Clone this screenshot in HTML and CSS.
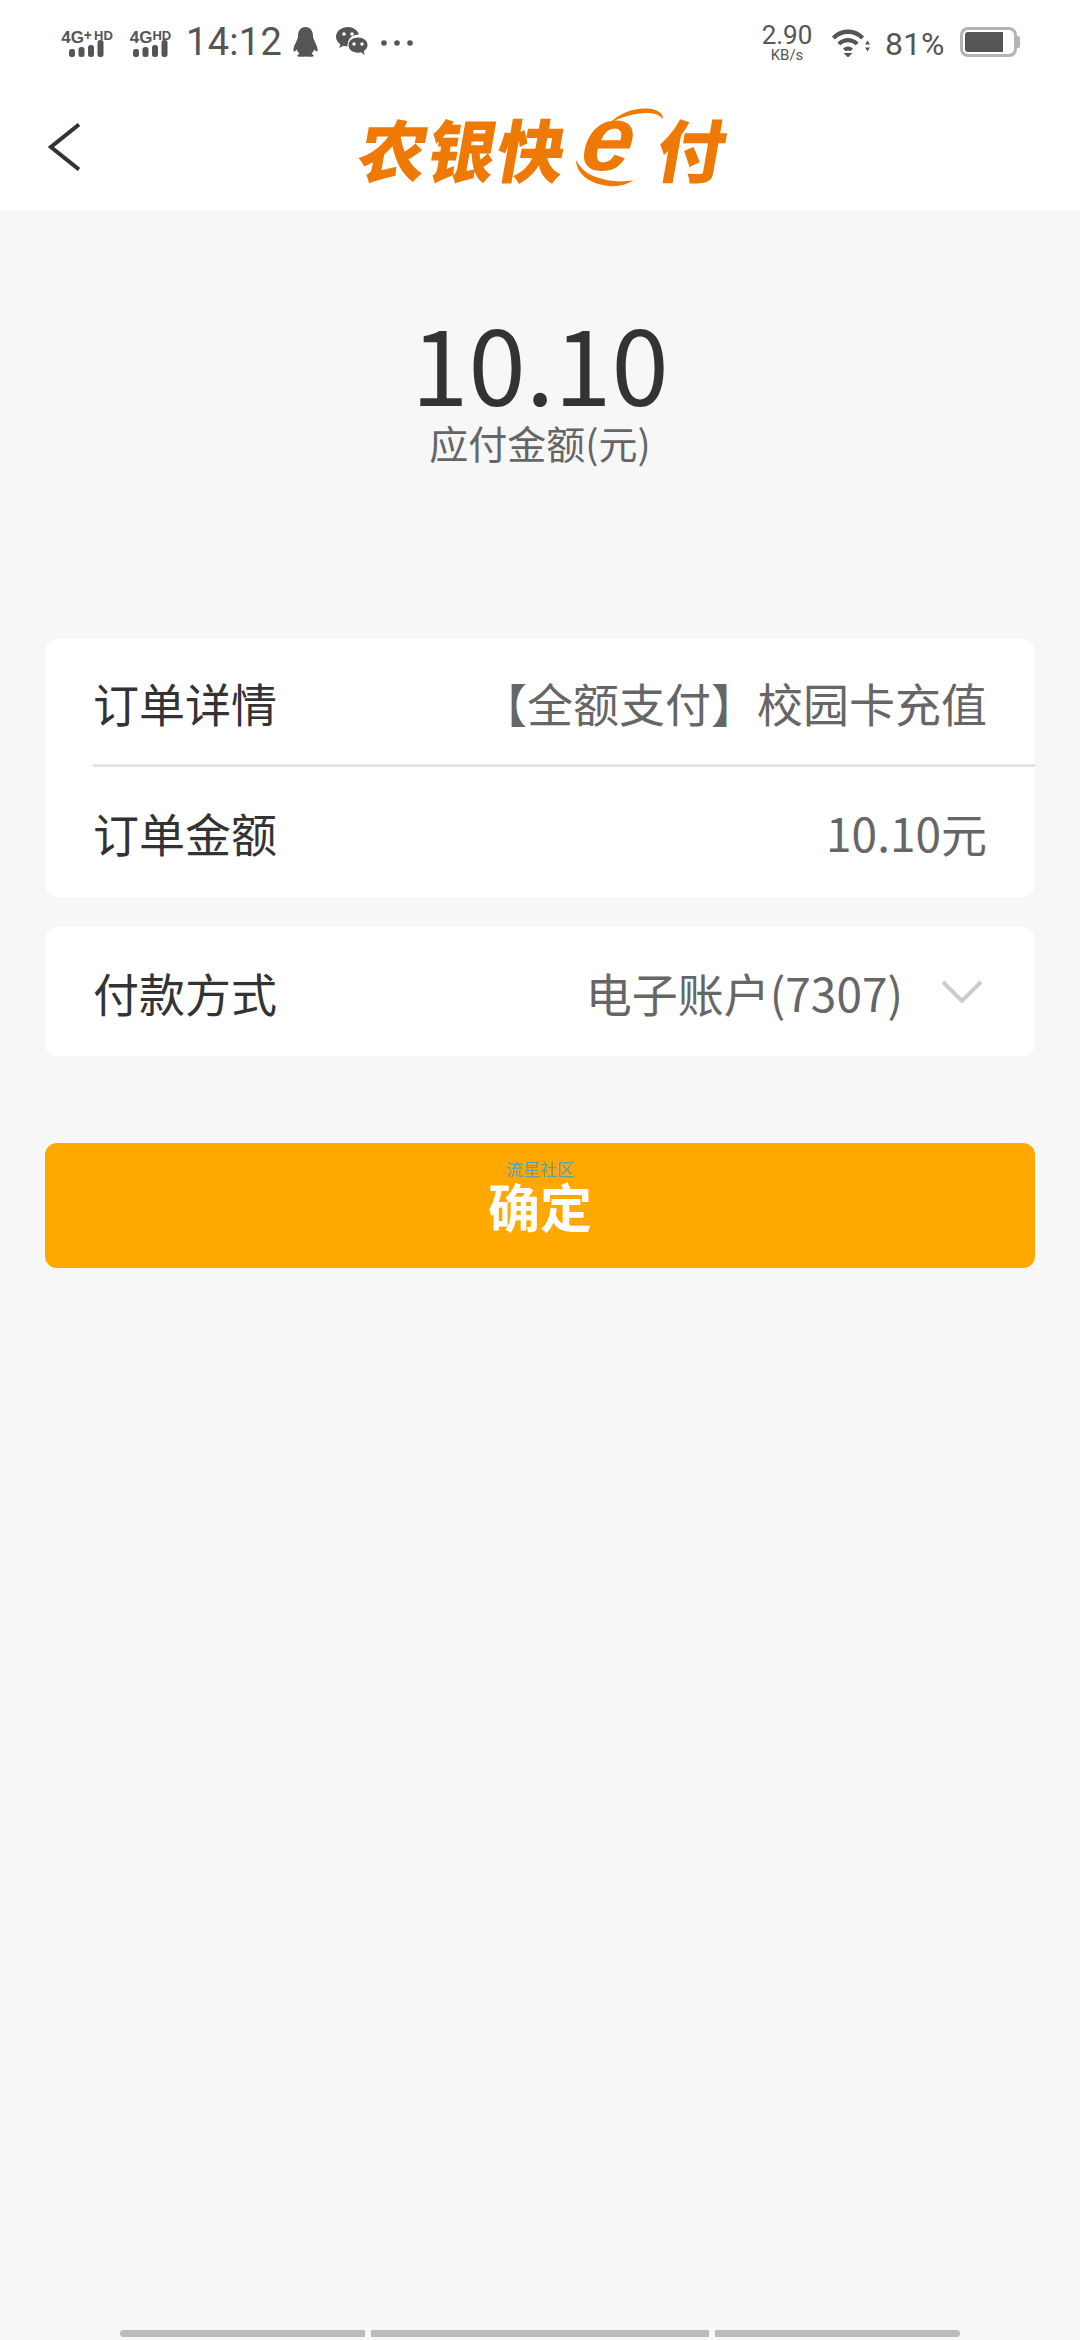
FILE: index.html
```html
<!DOCTYPE html>
<html lang="zh-CN">
<head>
<meta charset="utf-8">
<title>农银快e付</title>
<link rel="stylesheet" href="styles.css">
</head>
<body>
<div class="screen">
  <header class="top">
    <div class="status">
      <div class="status-left">
        <div class="sim sim-a">
          <span class="sim-label">4G<sup>+</sup><b>HD</b></span>
          <svg class="bars" width="36" height="17" viewBox="0 0 36 17"><rect x="0" y="9" width="6" height="8" rx="2.5"/><rect x="9.500" y="7" width="6" height="10" rx="2.500"/><rect x="19" y="5" width="6" height="12" rx="2.500"/><rect x="28.500" y="0" width="6" height="17" rx="2.500"/></svg>
        </div>
        <div class="sim sim-b">
          <span class="sim-label">4G<b>HD</b></span>
          <svg class="bars" width="36" height="17" viewBox="0 0 36 17"><rect x="0" y="9" width="6" height="8" rx="2.500"/><rect x="9.500" y="7" width="6" height="10" rx="2.500"/><rect x="19" y="5" width="6" height="12" rx="2.500"/><rect x="28.500" y="0" width="6" height="17" rx="2.500"/></svg>
        </div>
        <span class="time">14:12</span>
        <svg class="qq" width="25" height="30" viewBox="0 0 25 30"><path d="M12.500 0C7.500 0 5 4 5 9c0 1.500-.5 3-1.500 5C1.500 18 0 21.500.5 24c.5 1.200 2 .2 3.300-1.500.6 1.800 1.400 3.100 2.700 4.200C4.500 27.500 4 28.500 4.500 29.200 5.500 30 9 30 12.500 29.500 16 30 19.500 30 20.500 29.200 21 28.500 20.500 27.500 18.500 26.700c1.300-1.100 2.100-2.400 2.700-4.200 1.300 1.700 2.800 2.700 3.300 1.500.5-2.500-1-6-3-10-1-2-1.500-3.500-1.500-5C20 4 17.500 0 12.500 0z"/></svg>
        <svg class="wechat" width="32" height="31" viewBox="0 0 32 31"><path d="M12 0C5.400 0 0 4.300 0 9.700c0 3 1.700 5.700 4.300 7.500L3.200 21l4.300-2.300c1.300.4 2.700.6 4 .6h.4A9 9 0 0 1 12 16.500C12 11.500 16.700 7.600 23 7.600 21.600 3.200 17.200 0 12 0z"/><circle cx="8" cy="7" r="1.800" fill="#fff"/><circle cx="16" cy="7" r="1.800" fill="#fff"/><path d="M22 10c-5.500 0-10 3.600-10 8.100s4.500 8.100 10 8.100c1 0 2-.1 3-.4l4.200 3.200-.8-4.900c2.200-1.500 3.600-3.600 3.600-6 0-4.500-4.500-8.100-10-8.100z" stroke="#fff" stroke-width="1"/><circle cx="18" cy="17" r="1.700" fill="#fff"/><circle cx="26" cy="17" r="1.700" fill="#fff"/></svg>
        <svg class="dots" width="32" height="6" viewBox="0 0 32 6"><circle cx="3" cy="3" r="2.800"/><circle cx="16" cy="3" r="2.800"/><circle cx="29" cy="3" r="2.800"/></svg>
      </div>
      <div class="status-right">
        <div class="speed"><span class="speed-num">2.90</span><span class="speed-unit">KB/s</span></div>
        <svg class="wifi" width="38" height="28" viewBox="0 0 38 28"><path d="M0 7.500C8-2 24-2 32 7.500l-2.700 3C22.500 3 9.500 3 2.700 10.500z"/><path d="M5.500 13.500c6-6 15-6 21 0l-2.700 3c-4.500-4.300-11-4.300-15.600 0z"/><path d="M11 19.500c3-2.800 7-2.800 10 0l-2.600 2.800c-1.500-1.200-3.300-1.200-4.800 0z"/><path d="M11.500 24h9L16 28.500z"/><path d="M33 15.500l2.500-4 2.500 4zM33 18.500h5l-2.500 4z"/></svg>
        <span class="battery-pct">81%</span>
        <div class="battery"><div class="battery-level"></div></div><div class="battery-cap"></div>
      </div>
    </div>
    <nav class="nav">
      <svg class="back" width="32" height="48" viewBox="0 0 32 48"><path d="M31 1.500 3 24l28 22.500" fill="none" stroke="#333" stroke-width="4"/></svg>
      <div class="logo">
        <span class="logo-cn">农银快</span><span class="logo-e">e</span><span class="logo-cn logo-fu">付</span>
        <svg class="logo-swoosh" width="130" height="80" viewBox="0 0 130 80"><path d="M37 16C50 2 70-2 83 2c6 2 8 5 8 9-3-4-9-6-16-6-13 0-27 4-38 11z"/><path d="M4 52c0 13 13 24 33 26 9 1 17-1 25-6-14 3-27 1-38-3C15 66 8 60 4 52z"/></svg>
      </div>
    </nav>
  </header>

  <main class="content">
    <section class="summary">
      <div class="amount">10.10</div>
      <div class="amount-label">应付金额(元)</div>
    </section>

    <section class="card">
      <div class="row row-detail">
        <span class="row-label">订单详情</span>
        <span class="row-value">【全额支付】校园卡充值</span>
      </div>
      <div class="row row-total">
        <span class="row-label">订单金额</span>
        <span class="row-value">10.10元</span>
      </div>
    </section>

    <section class="card card-pay">
      <div class="row row-pay">
        <span class="row-label">付款方式</span>
        <span class="pay-choice">
          <span class="row-value">电子账户(7307)</span>
          <svg class="chevron" width="42" height="24" viewBox="0 0 42 24"><path d="M2 2l19 19L40 2" fill="none" stroke="#ccc" stroke-width="4"/></svg>
        </span>
      </div>
    </section>

    <button class="confirm" type="button">
      <span class="watermark">流星社区</span>
      <span>确定</span>
    </button>
  </main>

  <footer class="home-bar">
    <span class="seg seg-a"></span><span class="seg seg-b"></span><span class="seg seg-c"></span>
  </footer>
</div>
</body>
</html>
```
FILE: styles.css
```css
* { box-sizing: border-box; }
html, body { margin: 0; padding: 0; }
body {
  width: 1080px;
  height: 2340px;
  overflow: hidden;
  font-family: "Noto Sans CJK SC", "Noto Sans", sans-serif;
  background: #f7f7f7;
}
.screen { display: flex; flex-direction: column; height: 2340px; }

/* header */
.top { height: 210px; background: #fff; flex: none; }
.status {
  height: 84px;
  padding: 27px 60px 0 59px;
  display: flex;
  justify-content: space-between;
  align-items: flex-start;
  color: #555;
}
.status-left, .status-right { display: flex; align-items: flex-start; }
.status svg { fill: #555; flex: none; }
.sim { display: flex; flex-direction: column; align-items: center; width: 56px; height: 30px; }
.sim-b { width: 47px; margin-left: 12px; }
.sim-label {
  font: 700 17px/17px "Liberation Sans", sans-serif;
  white-space: nowrap;
  height: 15px;
  color: #555;
}
.sim-label sup { font-size: 14px; line-height: 0; vertical-align: 3px; margin: 0 2px 0 0; }
.sim-label b { font-size: 13px; vertical-align: 3px; }
.sim .bars { margin-top: -2px; }
.time {
  font: 400 38px/30px Roboto, sans-serif;
  margin-left: 12px;
  width: 90px;
  letter-spacing: .3px;
}
.qq { margin-left: 17px; }
.wechat { margin-left: 18px; }
.dots { margin: 13px 0 0 13px; }

.speed { display: flex; flex-direction: column; align-items: center; width: 52px; margin-top: -2px; }
.speed-num { font: 400 26px/20px Roboto, sans-serif; }
.speed-unit { font: 400 15px/12px Roboto, sans-serif; margin-top: 4px; }
.wifi { margin: 2px 0 0 19px; }
.battery-pct { font: 400 32px/28px Roboto, sans-serif; margin: 3px 0 0 15px; width: 62px; }
.battery {
  width: 57px;
  height: 30px;
  margin-left: 13px;
  border: 3px solid #b4b4b4;
  border-radius: 8px;
  padding: 2px;
}
.battery-level { width: 38px; height: 20px; background: #555; border-radius: 3px 0 0 3px; }
.battery-cap { width: 3px; height: 12px; margin: 9px 0 0 0; background: #b4b4b4; border-radius: 0 2px 2px 0; }

/* nav */
.nav { height: 126px; position: relative; padding: 39px 0 0 48px; }
.back { display: block; }
.logo {
  position: absolute;
  left: 358px;
  top: 24px;
  width: 366px;
  height: 80px;
  color: #ee7a05;
}
.logo-cn, .logo-e {
  position: absolute;
  top: 0;
  font-weight: 900;
  font-size: 68px;
  line-height: 80px;
  transform: skewX(-10deg);
  white-space: nowrap;
}
.logo-cn { left: 2px; letter-spacing: 1px; }
.logo-e {
  left: 226px;
  top: -10px;
  font: italic 700 92px/80px "Liberation Sans", sans-serif;
}
.logo-fu { left: 300px; }
.logo-swoosh { position: absolute; left: 214px; top: 0; fill: #ee7a05; }

/* content */
.content { flex: 1; padding: 0 45px; display: flex; flex-direction: column; }
.summary { height: 429px; padding-top: 90px; text-align: center; }
.amount { font-size: 103px; line-height: 124px; color: #333; }
.amount-label { font-size: 39px; line-height: 56px; color: #666; margin-top: -10px; }

.card { background: #fff; border-radius: 12px; }
.card-pay { margin-top: 30px; }
.row {
  display: flex;
  align-items: center;
  justify-content: space-between;
  margin-left: 48px;
  padding-right: 48px;
  font-size: 46px;
  white-space: nowrap;
}
.row-detail { height: 128px; border-bottom: 3px solid #e3e3e3; }
.row-total { height: 130px; }
.row-pay { height: 129px; padding-right: 52px; }
.row-label { color: #333; }
.row-value { color: #666; }
.pay-choice { display: flex; align-items: center; }
.chevron { margin-left: 38px; }

.confirm {
  position: relative;
  display: block;
  margin-top: 87px;
  width: 100%;
  height: 125px;
  border: 0;
  border-radius: 12px;
  background: #ffa800;
  color: #fff;
  font-family: inherit;
  font-size: 52px;
  font-weight: 700;
  padding: 0;
}
.watermark {
  position: absolute;
  left: 0;
  right: 0;
  top: 16px;
  font-size: 17px;
  line-height: 20px;
  font-weight: 400;
  color: #5a9fb5;
}

/* home indicator */
.home-bar { flex: none; height: 10px; padding-left: 120px; display: flex; gap: 6px; }
.seg { height: 7px; background: #bbb; }
.seg-a { width: 245px; border-radius: 4px 0 0 4px; }
.seg-b { width: 338px; }
.seg-c { width: 245px; border-radius: 0 4px 4px 0; }
```
